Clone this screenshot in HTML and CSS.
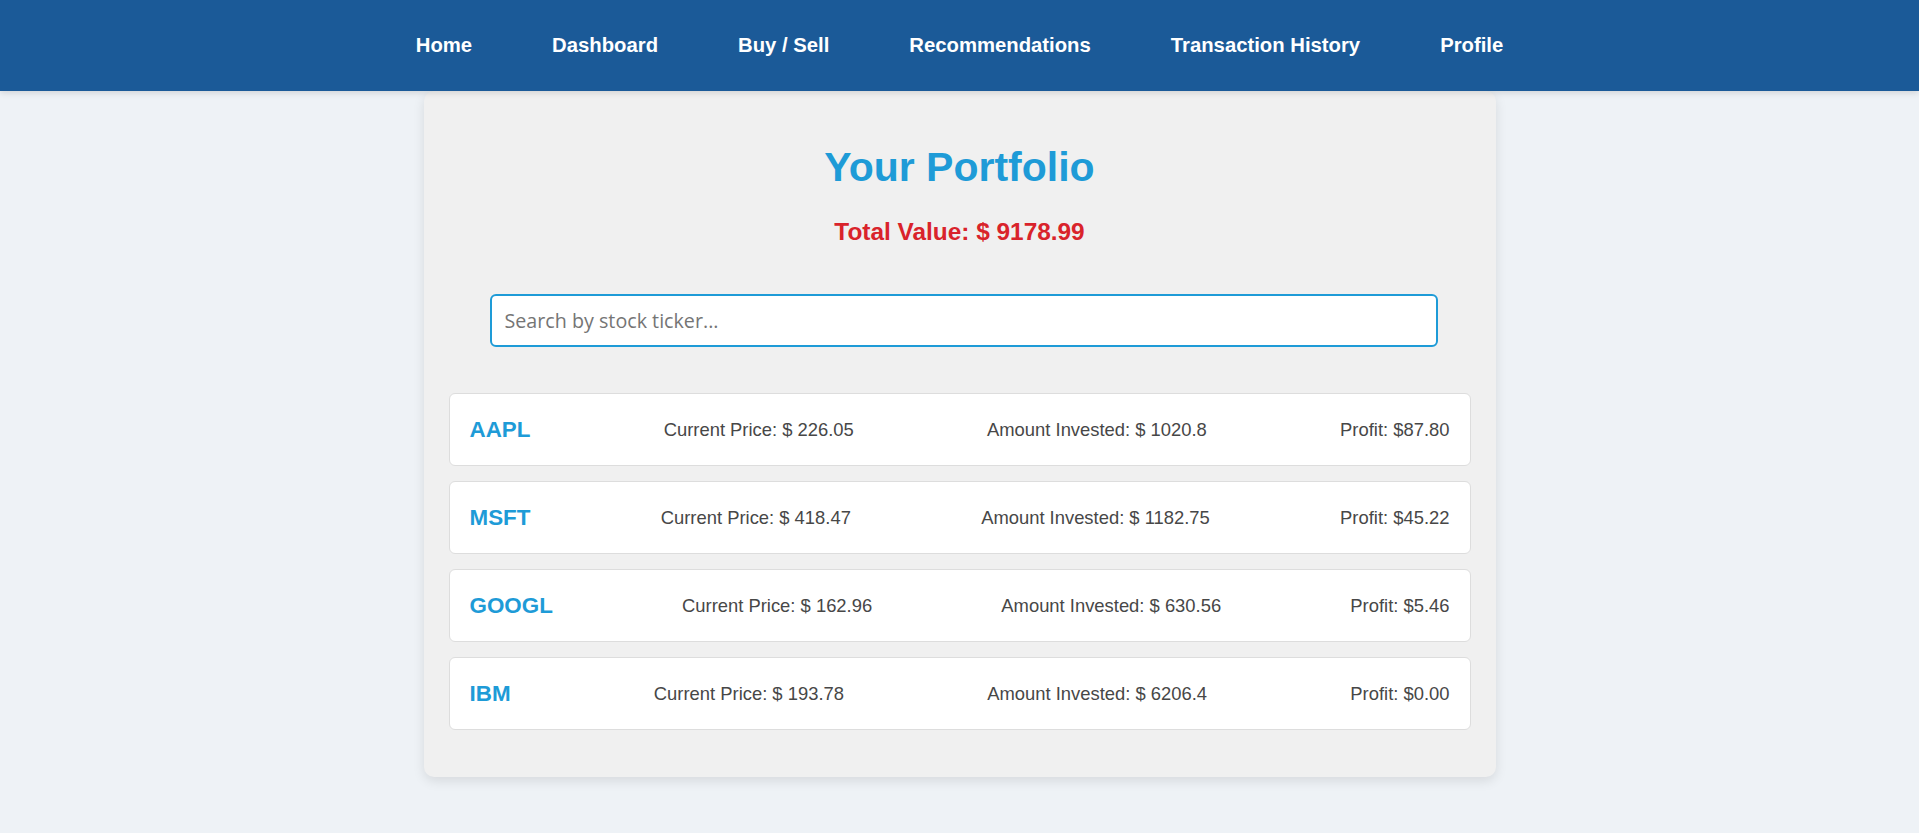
FILE: index.html
```html
<!DOCTYPE html>
<html lang="en">
<head>
<meta charset="utf-8">
<title>Your Portfolio</title>
<link rel="stylesheet" href="styles.css">
</head>
<body>
<nav class="topnav">
  <a class="nav-link" href="#">Home</a>
  <a class="nav-link" href="#">Dashboard</a>
  <a class="nav-link" href="#">Buy / Sell</a>
  <a class="nav-link" href="#">Recommendations</a>
  <a class="nav-link" href="#">Transaction History</a>
  <a class="nav-link" href="#">Profile</a>
</nav>
<main class="card">
  <h1 class="title">Your Portfolio</h1>
  <p class="total">Total Value: $ 9178.99</p>
  <input class="search" type="text" placeholder="Search by stock ticker...">
  <div class="list">
    <div class="row">
      <span class="ticker">AAPL</span>
      <span class="cell">Current Price: $ 226.05</span>
      <span class="cell">Amount Invested: $ 1020.8</span>
      <span class="cell">Profit: $87.80</span>
    </div>
    <div class="row">
      <span class="ticker">MSFT</span>
      <span class="cell">Current Price: $ 418.47</span>
      <span class="cell">Amount Invested: $ 1182.75</span>
      <span class="cell">Profit: $45.22</span>
    </div>
    <div class="row">
      <span class="ticker">GOOGL</span>
      <span class="cell">Current Price: $ 162.96</span>
      <span class="cell">Amount Invested: $ 630.56</span>
      <span class="cell">Profit: $5.46</span>
    </div>
    <div class="row">
      <span class="ticker">IBM</span>
      <span class="cell">Current Price: $ 193.78</span>
      <span class="cell">Amount Invested: $ 6206.4</span>
      <span class="cell">Profit: $0.00</span>
    </div>
  </div>
</main>
</body>
</html>
```
FILE: styles.css
```css
* { box-sizing: border-box; }

html, body {
  margin: 0;
  padding: 0;
}

body {
  background: #eef2f6;
  font-family: "Liberation Sans", Arial, sans-serif;
  min-height: 833px;
}

.topnav {
  height: 91px;
  background: #1b5a98;
  display: flex;
  justify-content: center;
  align-items: center;
  gap: 80px;
  box-shadow: 0 2px 6px rgba(0, 0, 0, 0.12);
  position: relative;
  z-index: 1;
}

.nav-link {
  color: #ffffff;
  text-decoration: none;
  font-weight: bold;
  font-size: 20.3px;
}

.card {
  display: block;
  width: 1072px;
  margin: 0 auto;
  padding: 25px 25px 47px;
  background: #f0f0f0;
  border-radius: 10px;
  box-shadow: 0 4px 12px rgba(0, 0, 0, 0.1);
}

.title {
  margin: 28px 0 27px;
  text-align: center;
  color: #1e9bd7;
  font-size: 41px;
  font-weight: bold;
}

.total {
  margin: 0 0 48px;
  text-align: center;
  color: #d9232b;
  font-size: 24.4px;
  font-weight: bold;
}

.search {
  display: block;
  width: 948px;
  height: 53px;
  margin: 0 0 46px 41px;
  padding: 0 13px;
  border: 2px solid #1e9bd7;
  border-radius: 6px;
  background: #ffffff;
  font-family: "Open Sans", "Noto Sans", sans-serif;
  font-size: 19.7px;
  color: #333;
  outline: none;
}

.search::placeholder {
  color: #757575;
}

.list {
  display: flex;
  flex-direction: column;
  gap: 15px;
}

.row {
  height: 73px;
  display: flex;
  justify-content: space-between;
  align-items: center;
  padding: 0 20px;
  background: #ffffff;
  border: 1px solid #dddddd;
  border-radius: 6px;
}

.ticker {
  color: #1e9bd7;
  font-weight: bold;
  font-size: 22.4px;
}

.cell {
  color: #474747;
  font-size: 18.4px;
}
```
